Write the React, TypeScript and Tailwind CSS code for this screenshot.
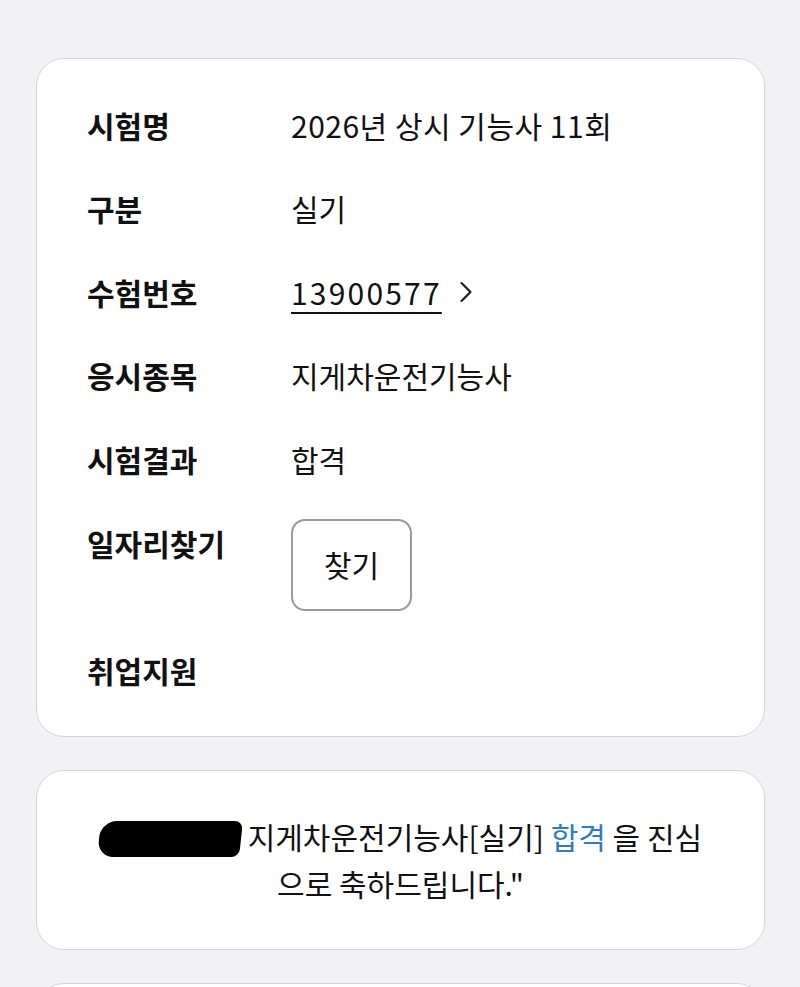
import { ChevronRight } from "lucide-react";

const font = { fontFamily: '"Noto Sans CJK KR", "Noto Sans", sans-serif' };

function Row({ label, children }: { label: string; children?: React.ReactNode }) {
  return (
    <div className="flex h-[83.5px] items-center">
      <div className="w-[204px] text-[30px] font-bold leading-[40px] text-[#111]">{label}</div>
      <div className="text-[30px] leading-[40px] text-[#111]">{children}</div>
    </div>
  );
}

export default function App() {
  return (
    <div className="min-h-[987px] overflow-hidden bg-[#f1f2f6] pt-[58px]" style={font}>
      <div className="ml-[36px] mr-[35px] rounded-[28px] border border-[#d4d4d8] bg-white pb-[24px] pl-[50px] pt-[24px]">
        <Row label="시험명">
          <span className="tracking-[0.5px]">2026년 상시 기능사 11회</span>
        </Row>
        <Row label="구분">실기</Row>
        <Row label="수험번호">
          <span className="flex items-center gap-[6px]">
            <span className="tracking-[2.2px] underline decoration-2 underline-offset-[7px]">13900577</span>
            <ChevronRight size={36} strokeWidth={1.5} className="text-[#222]" />
          </span>
        </Row>
        <Row label="응시종목">지게차운전기능사</Row>
        <Row label="시험결과">합격</Row>
        <div className="flex items-start pb-[18px]">
          <div className="mt-[22px] w-[204px] text-[30px] font-bold leading-[40px] text-[#111]">일자리찾기</div>
          <button className="mt-[18px] flex h-[92px] w-[121px] items-center justify-center rounded-[14px] border-2 border-[#9a9a9a] bg-white text-[30px] text-[#111]">
            찾기
          </button>
        </div>
        <Row label="취업지원" />
      </div>

      <div className="ml-[36px] mr-[35px] mt-[33px] rounded-[28px] border border-[#d4d4d8] bg-white py-[42px] text-center text-[30px] leading-[47px] text-[#111]">
        <span className="relative inline-block h-[36px] w-[142px] translate-y-[8px] -skew-x-6 rounded-l-[16px] rounded-r-[8px] bg-black" />
        <span> 지게차운전기능사[실기] </span>
        <span className="text-[#2f7bc0]">합격</span>
        <span> 을 진심</span>
        <br />
        <span>으로 축하드립니다."</span>
      </div>

      <div className="ml-[36px] mr-[35px] mt-[33px] h-[100px] rounded-t-[28px] border border-[#d4d4d8] bg-white" />
    </div>
  );
}
